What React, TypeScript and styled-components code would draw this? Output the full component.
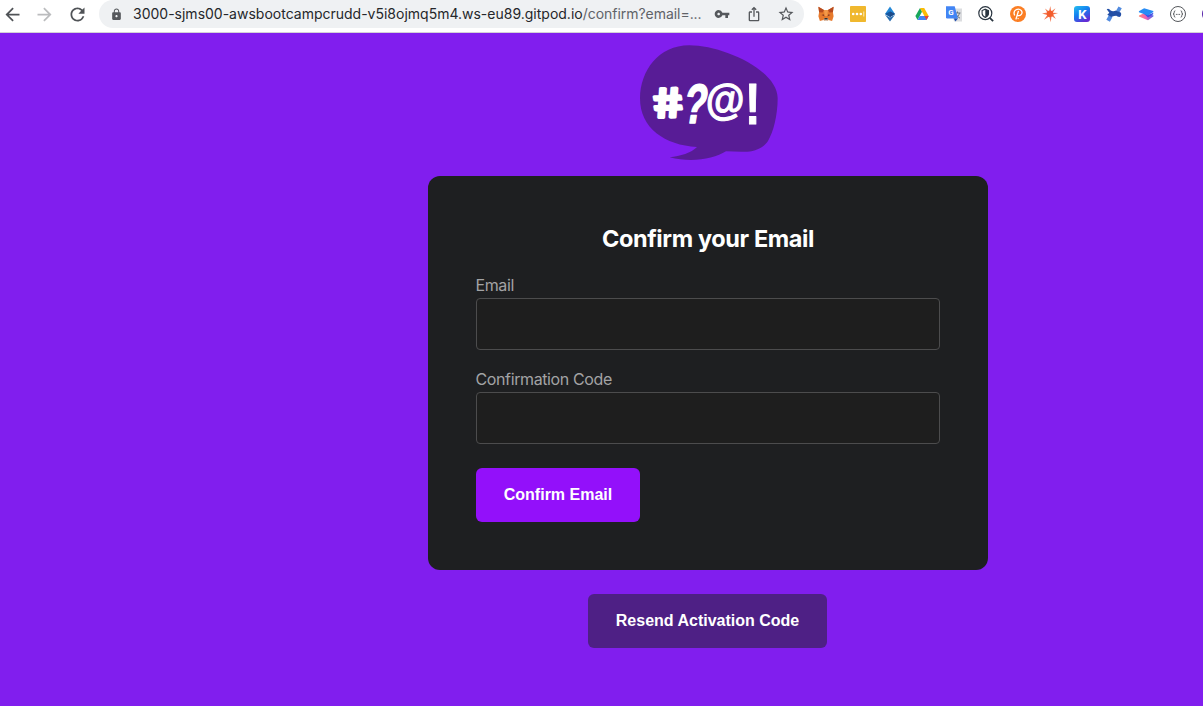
import React from "react";
import styled, { createGlobalStyle } from "styled-components";
import {
  MdArrowBack,
  MdArrowForward,
  MdRefresh,
  MdLock,
  MdVpnKey,
  MdIosShare,
  MdStarBorder,
} from "react-icons/md";

const GlobalStyle = createGlobalStyle`
  * { box-sizing: border-box; }
  body { margin: 0; overflow: hidden; font-family: Inter, "Liberation Sans", sans-serif; }
`;

const Window = styled.div`
  display: flex;
  flex-direction: column;
  height: 706px;
  overflow: hidden;
  background: #811eee;
`;

const Toolbar = styled.header`
  display: flex;
  flex: none;
  height: 33px;
  padding-bottom: 4px;
  background: #fff;
  border-bottom: 1px solid #d4d0d8;
`;

const NavButtons = styled.nav`
  display: flex;
  width: 99px;
  flex: none;
  padding-left: 2px;
  gap: 11.4px;
  align-items: center;
`;

const NavButton = styled.span<{ $disabled?: boolean }>`
  display: flex;
  width: 21px;
  color: ${(p) => (p.$disabled ? "#bbbcbe" : "#505357")};
`;

const AddressBar = styled.div`
  display: flex;
  flex: none;
  align-items: center;
  width: 705px;
  height: 28px;
  padding-left: 11px;
  border-radius: 14px;
  background: #eff1f3;
  color: #55585c;
`;

const LockSlot = styled.span`
  display: flex;
  width: 23px;
  flex: none;
`;

const Url = styled.span`
  width: 573px;
  flex: none;
  white-space: nowrap;
  font-size: 14px;
  line-height: 28px;
  letter-spacing: -0.04px;
  color: #5f6368;
`;

const Host = styled.span`
  color: #25272a;
  letter-spacing: 0;
`;

const Cell = styled.span`
  display: flex;
  flex: none;
  width: 32px;
  height: 28px;
  align-items: center;
  justify-content: center;
`;

const Extensions = styled.div`
  display: flex;
  flex: none;
  padding-left: 6px;
`;

const Glyph = styled.svg`
  display: block;
  width: 16px;
  height: 16px;
  overflow: visible;
`;

const Page = styled.main`
  display: flex;
  flex-direction: column;
  align-items: center;
  width: 560px;
  margin-left: 428px;
  padding-top: 12px;
`;

const Logo = styled.svg`
  display: block;
  width: 138px;
  height: 116px;
  margin: 0 0 15px 2px;
`;

const Card = styled.form`
  display: flex;
  flex-direction: column;
  width: 560px;
  height: 394px;
  padding: 48px;
  border-radius: 12px;
  background: #1e1f21;
`;

const Title = styled.h2`
  margin: 0 0 20px;
  height: 29px;
  line-height: 29px;
  text-align: center;
  font-size: 23.5px;
  font-weight: 650;
  letter-spacing: -0.39px;
  white-space: nowrap;
  color: #fff;
`;

const Field = styled.label`
  display: flex;
  flex-direction: column;
  margin-bottom: 17px;
`;

const FieldName = styled.span`
  height: 25px;
  line-height: 25px;
  margin-left: -0.5px;
  font-size: 16px;
  letter-spacing: -0.38px;
  color: #a3a3a5;
`;

const Input = styled.input`
  width: 100%;
  height: 52px;
  border: 1px solid #4c4c4d;
  border-radius: 4px;
  background: #1e1e1e;
  outline: none;
`;

const Button = styled.button<{ $width: number; $muted?: boolean }>`
  display: block;
  width: ${(p) => p.$width}px;
  height: 54px;
  padding: 0;
  border: 0;
  border-radius: 6px;
  background: ${(p) => (p.$muted ? "#4e2085" : "#9310fa")};
  color: #fff;
  font: bold 16px/54px "Liberation Sans", Arial, sans-serif;
  white-space: nowrap;
`;

const SubmitRow = styled.div`
  margin-top: 7px;
`;

const ResendRow = styled.div`
  width: 240px;
  margin-top: 24px;
`;

const Brand = () => (
  <Logo viewBox="30 30 414 348">
    <path
      fill="#581c96"
      d="M30 190C31 108 85 31 178 31C278 31 443 105 443 190C443 240 430 293 414 318C398 342 368 352 335 350L288 349C252 372 184 384 119 367C151 363 184 354 201 336C105 331 30 280 30 190Z"
    />
    <g
      fill="#fff"
      stroke="#fff"
      strokeLinejoin="round"
      fontFamily='"Liberation Sans", Arial, sans-serif'
      fontWeight="700"
      textAnchor="middle"
    >
      <text fontSize="125" strokeWidth="10" transform="translate(122 246) skewX(9) rotate(-2) scale(1.22 1)">#</text>
      <text fontSize="166" strokeWidth="5" transform="translate(190 264) skewX(-9) scale(.68 1)">?</text>
      <text fontSize="128" strokeWidth="3" transform="translate(287 237) rotate(-3) scale(.94 1)">@</text>
      <text fontSize="174" strokeWidth="3" transform="translate(368 267) scale(.8 1)">!</text>
    </g>
  </Logo>
);

const Fox = () => (
  <Glyph viewBox="0 0 16 16">
    <path fill="#e77a2d" d="M.4.8 6 4h4L15.6.8l-.7 5.500.7 4-1.500 4.700-3.600-1L9.300 15H6.700L5.500 14l-3.600 1L.4 10.300l.7-4z" />
    <path fill="#b64b20" d="M.4.8 6 4 4.600 6.500 1.100 6.300zM15.600.8 10 4l1.400 2.500 3.500-.2z" />
    <path fill="#f39a4b" d="m6 4 .8 6h2.400L10 4z" />
    <path fill="#8d3e22" d="m3.500 9 2.200-.7.8 2.200zM12.500 9l-2.200-.7-.8 2.200z" />
    <path fill="#d8c3b5" d="m5.500 13.500 1-1.500h3l1 1.500L9.300 15H6.700z" />
    <path fill="#37302f" d="M6.500 12h3l.3 1.500H6.200z" />
  </Glyph>
);

const PasswordDots = () => (
  <Glyph viewBox="0 0 16 16">
    <rect width="16" height="16" rx=".8" fill="#f0b82e" />
    <g fill="#fff">
      <circle cx="3.200" cy="8" r="1.300" />
      <circle cx="7" cy="8" r="1.300" />
      <circle cx="10.800" cy="8" r="1.300" />
      <path d="M13.500 5.500h.7v5h-.7z" />
    </g>
  </Glyph>
);

const Ether = () => (
  <Glyph viewBox="0 0 16 16">
    <path fill="#2388d8" d="M8 .5 13 8 8 10.700 3 8z" />
    <path fill="#17569f" d="M3 8 8 10.900 13 8 8 5.600z" />
    <path fill="#1d4a88" d="M8 5.600 13 8 8 10.900z" />
    <path fill="#2a6db0" d="M3 8.800 8 11.600l5-2.800-5 6.700z" />
  </Glyph>
);

const Drive = () => (
  <Glyph viewBox="0 0 16 16">
    <path fill="#18a75b" d="M6 2 1.400 10.100 3.500 14 8 5.700z" />
    <path fill="#fbbc05" d="M6 2h4.200l4.500 8h-4.300z" />
    <path fill="#4285f4" d="M5.700 10h9L12.500 14h-9z" />
    <path fill="#ea4335" d="M10.400 10h4.300l-2.200 4z" />
  </Glyph>
);

const Translate = () => (
  <Glyph viewBox="0 0 16 16">
    <path fill="#dcdde0" d="M5 2.500h11v13H8z" />
    <path fill="none" stroke="#6f7780" strokeWidth="1" d="M8.500 7h6M11.500 5.500V7M13.500 7c-.5 2.300-2 4-4 5M10 8.500c1 1.500 2.300 2.800 4 3.700" />
    <path fill="#4285f4" d="M0 .3h8.700L12 12.500H1.200Q0 12.500 0 11.300z" />
    <path fill="#2450b0" d="M7.800 12.500H12L9.400 15.600z" />
    <text x="5" y="9.200" textAnchor="middle" fontSize="8" fontWeight="700" fontFamily="Roboto, sans-serif" fill="#fff">G</text>
  </Glyph>
);

const ShieldSearch = () => (
  <Glyph viewBox="0 0 16 16" fill="none" stroke="#29343f">
    <circle cx="7.300" cy="7.200" r="6.500" strokeWidth="1.200" />
    <path strokeWidth="1.800" d="m11.800 11.800 3.300 3.300" />
    <path strokeWidth="1.100" d="M7.300 3.200 10.500 4.500v3c0 1.800-1.300 3-3.200 4-1.900-1-3.200-2.200-3.200-4v-3z" />
    <path fill="#29343f" stroke="none" d="M7.300 3.200 10.500 4.500v3c0 1.800-1.300 3-3.200 4z" />
  </Glyph>
);

const OrangePin = () => (
  <Glyph viewBox="0 0 16 16">
    <circle cx="8" cy="8" r="8" fill="#fb7e24" />
    <path fill="none" stroke="#fff" strokeWidth="1.300" strokeLinecap="round" d="M4.500 9C2.500 4 8.500 1.600 11.200 4.500c2.200 2.600-.5 6-4 4.800M8.400 5.300 6 13" />
    <circle cx="8.100" cy="12.600" r=".7" fill="#fff" />
  </Glyph>
);

const Spark = () => (
  <Glyph viewBox="0 0 16 16">
    <path fill="#f4754e" d="m8.300 0 .9 5.600 4.300-3.400-2.700 4.600 5.300.3-4.900 1.400 2.700 4.500-4.400-3-.7 6.200-1.500-5.800L2 13.800l3.300-4.900L0 7.600l5.200-1.200-2.200-3.800 4 2.900z" />
    <circle cx="8" cy="7.800" r="3.200" fill="#f35d2c" />
  </Glyph>
);

const Keplr = () => (
  <Glyph viewBox="0 0 16 16">
    <defs>
      <linearGradient id="keplr" x1="0" y1="0" x2=".6" y2="1">
        <stop offset="0" stopColor="#27c0ef" />
        <stop offset=".5" stopColor="#127ff0" />
        <stop offset="1" stopColor="#632cd5" />
      </linearGradient>
    </defs>
    <rect width="16" height="16" rx="3" fill="url(#keplr)" />
    <text x="8.300" y="12.600" textAnchor="middle" fontSize="13.500" fontWeight="700" fontFamily="Roboto, sans-serif" fill="#fff">K</text>
  </Glyph>
);

const Satellite = () => (
  <Glyph viewBox="0 0 16 16">
    <path fill="#528be0" d="m10.200 4.500 2.300-4 3.300 1.800-2.600 4.500zM.3 13.700l2.500-4.500 3.600 2-2.500 4.500z" />
    <path fill="#234fa6" d="M.7 3.300Q2.700 2 4.700 4.600 7 6 10 4.500l5 2.200q.8 3.400-1.700 4.300-2-.2-3-1.200-2 0-5 1.200L1.300 8.800l2-2z" />
  </Glyph>
);

const Layers = () => (
  <Glyph viewBox="0 0 16 16">
    <defs>
      <linearGradient id="layers">
        <stop offset="0" stopColor="#ff8a78" />
        <stop offset=".5" stopColor="#ed60b8" />
        <stop offset="1" stopColor="#4361ed" />
      </linearGradient>
    </defs>
    <path fill="url(#layers)" d="M1 9.500 6.500 7l9 2.500v.8L10 14.200.9 10.500z" />
    <path fill="#3d4fe8" d="m5 7 5.500 2 4.700-2.300v1.500L10 11.500z" />
    <path fill="#278cf5" d="m.9 5.300 5.200-3 9.200 2.800v.8L10 9.400.9 6.200z" />
  </Glyph>
);

const Braces = () => (
  <Glyph viewBox="0 0 16 16" fill="none" stroke="#55585c">
    <circle cx="8" cy="8" r="7.500" strokeWidth="1" />
    <path d="M5.300 4.800Q4 4.800 4.200 6.500 4.300 8 3 8q1.300 0 1.200 1.500-.2 1.700 1.100 1.700M10.700 4.800q1.300 0 1.100 1.700Q11.700 8 13 8q-1.300 0-1.200 1.500.2 1.700-1.100 1.700" />
    <path d="M5.900 8.400h1M7.500 8.400h1M9.100 8.400h1" />
  </Glyph>
);

const PurpleDot = () => (
  <Glyph viewBox="0 0 16 16">
    <circle cx="8" cy="8" r="8" fill="#5520a9" />
  </Glyph>
);

const extensions = [Fox, PasswordDots, Ether, Drive, Translate, ShieldSearch, OrangePin, Spark, Keplr, Satellite, Layers, Braces, PurpleDot];

export default function App() {
  return (
    <Window>
      <GlobalStyle />
      <Toolbar>
        <NavButtons>
          <NavButton><MdArrowBack size={21} /></NavButton>
          <NavButton $disabled><MdArrowForward size={21} /></NavButton>
          <NavButton><MdRefresh size={21} /></NavButton>
        </NavButtons>
        <AddressBar>
          <LockSlot><MdLock size={13} /></LockSlot>
          <Url>
            <Host>3000-sjms00-awsbootcampcrudd-v5i8ojmq5m4.ws-eu89.gitpod.io</Host>
            /confirm?email=...
          </Url>
          <Cell><MdVpnKey size={16} /></Cell>
          <Cell><MdIosShare size={16} /></Cell>
          <Cell><MdStarBorder size={18} /></Cell>
        </AddressBar>
        <Extensions>
          {extensions.map((Icon, i) => (
            <Cell key={i}><Icon /></Cell>
          ))}
        </Extensions>
      </Toolbar>
      <Page>
        <Brand />
        <Card>
          <Title>Confirm your Email</Title>
          <Field>
            <FieldName>Email</FieldName>
            <Input type="text" />
          </Field>
          <Field>
            <FieldName>Confirmation Code</FieldName>
            <Input type="text" />
          </Field>
          <SubmitRow>
            <Button type="button" $width={164}>Confirm Email</Button>
          </SubmitRow>
        </Card>
        <ResendRow>
          <Button type="button" $width={239} $muted>Resend Activation Code</Button>
        </ResendRow>
      </Page>
    </Window>
  );
}
